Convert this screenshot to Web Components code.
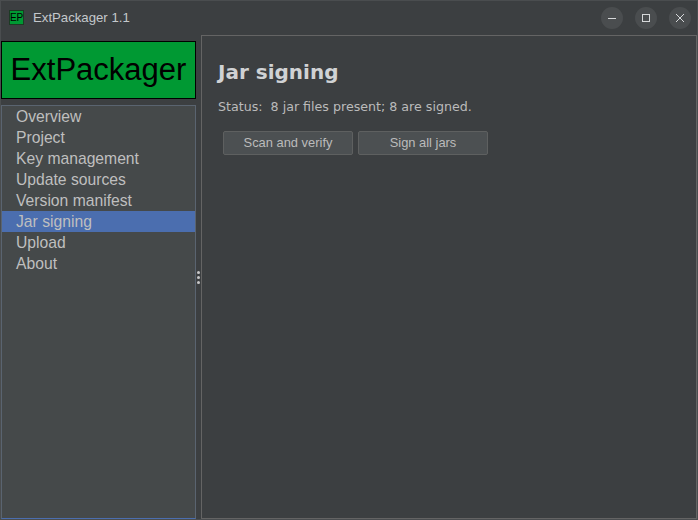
<!DOCTYPE html>
<html>
<head>
<meta charset="utf-8">
<title>ExtPackager 1.1</title>
<style>
  html, body { margin: 0; padding: 0; height: 100%; background: #3c3f41; overflow: hidden; }
  body { font-family: "Liberation Sans", sans-serif; color: #bbbbbb; }
</style>
</head>
<body>
<ep-window>
  <ep-titlebar slot="title" label="ExtPackager 1.1"></ep-titlebar>
  <ep-sidebar slot="side" heading="ExtPackager">
    <ep-nav-item>Overview</ep-nav-item>
    <ep-nav-item>Project</ep-nav-item>
    <ep-nav-item>Key management</ep-nav-item>
    <ep-nav-item>Update sources</ep-nav-item>
    <ep-nav-item>Version manifest</ep-nav-item>
    <ep-nav-item selected>Jar signing</ep-nav-item>
    <ep-nav-item>Upload</ep-nav-item>
    <ep-nav-item>About</ep-nav-item>
  </ep-sidebar>
  <ep-splitter slot="split"></ep-splitter>
  <ep-panel slot="main" heading="Jar signing" status="Status:&nbsp; 8 jar files present; 8 are signed.">
    <ep-button>Scan and verify</ep-button>
    <ep-button>Sign all jars</ep-button>
  </ep-panel>
</ep-window>

<script>
class EpWindow extends HTMLElement {
  connectedCallback() {
    this.attachShadow({ mode: "open" });
    this.shadowRoot.innerHTML = `
      <style>
        :host {
          display: grid; box-sizing: border-box; width: 698px; height: 520px;
          grid-template-rows: 34px 1fr; background: #3c3f41;
          border: 1px solid #4a4d4f;
        }
        .body { display: flex; min-height: 0; }
      </style>
      <slot name="title"></slot>
      <div class="body">
        <slot name="side"></slot>
        <slot name="split"></slot>
        <slot name="main"></slot>
      </div>
    `;
  }
}

class EpTitlebar extends HTMLElement {
  connectedCallback() {
    this.attachShadow({ mode: "open" });
    const label = this.getAttribute("label") || "";
    this.shadowRoot.innerHTML = `
      <style>
        :host {
          display: flex; align-items: center; padding: 0 6px 1px 8px;
          font: 13.2px "Liberation Sans", sans-serif; color: #c4c8cc;
        }
        .icon {
          display: flex; align-items: center; justify-content: center;
          width: 15px; height: 15px; box-sizing: border-box; margin-right: 9px;
          background: #009933; border: 1px solid #1c3a24; color: #000;
          font: 10px/13px "Liberation Sans", sans-serif; letter-spacing: -0.2px;
          white-space: nowrap;
        }
        .label { flex: 1; }
        .btns { display: flex; gap: 12px; }
        .btn {
          width: 22px; height: 22px; border-radius: 50%; background: #4a4d4f;
          display: flex; align-items: center; justify-content: center;
        }
        svg { width: 10px; height: 10px; stroke: #d6d8da; fill: none; stroke-width: 1; }
      </style>
      <div class="icon">EP</div>
      <div class="label">${label}</div>
      <div class="btns">
        <div class="btn"><svg viewBox="0 0 10 10"><path d="M1 5.5h8"/></svg></div>
        <div class="btn"><svg viewBox="0 0 10 10"><rect x="1.5" y="1.5" width="7" height="7"/></svg></div>
        <div class="btn"><svg viewBox="0 0 10 10"><path d="M1 1l8 8M9 1l-8 8"/></svg></div>
      </div>
    `;
  }
}

class EpSidebar extends HTMLElement {
  connectedCallback() {
    this.attachShadow({ mode: "open" });
    const heading = this.getAttribute("heading") || "";
    this.shadowRoot.innerHTML = `
      <style>
        :host { display: flex; flex-direction: column; width: 195px; flex: none; padding-top: 6px; gap: 6px; }
        .logo {
          box-sizing: border-box; height: 58px; background: #009933; border: 1px solid #000;
          color: #000; font: 31px/56px "Liberation Sans", sans-serif; text-align: center;
        }
        .list {
          flex: 1; background: #45494a; border: 1px solid #5a6470; border-bottom-color: #4b6eaf;
        }
      </style>
      <div class="logo">${heading}</div>
      <div class="list"><slot></slot></div>
    `;
  }
}

class EpNavItem extends HTMLElement {
  connectedCallback() {
    this.attachShadow({ mode: "open" });
    this.shadowRoot.innerHTML = `
      <style>
        :host {
          display: block; height: 21px; padding-left: 14px;
          font: 15.7px/21px "Liberation Sans", sans-serif; color: #bfbfbf; white-space: nowrap;
        }
        :host([selected]) { background: #4b6eaf; }
      </style>
      <slot></slot>
    `;
  }
}

class EpSplitter extends HTMLElement {
  connectedCallback() {
    this.attachShadow({ mode: "open" });
    this.shadowRoot.innerHTML = `
      <style>
        :host {
          display: flex; flex-direction: column; align-items: center; justify-content: center;
          width: 5px; flex: none; gap: 2px;
        }
        i { width: 3px; height: 3px; border-radius: 50%; background: #c8c8c8; }
      </style>
      <i></i><i></i><i></i>
    `;
  }
}

class EpPanel extends HTMLElement {
  connectedCallback() {
    this.attachShadow({ mode: "open" });
    const heading = this.getAttribute("heading") || "";
    const status = this.getAttribute("status") || "";
    this.shadowRoot.innerHTML = `
      <style>
        :host {
          display: flex; flex-direction: column; flex: 1; box-sizing: border-box;
          border: 1px solid #646464;
          padding: 23px 16px 0 16px; background: #3c3f41; color: #bbbbbb;
        }
        h1 {
          margin: 0; font: bold 20px/27px "DejaVu Sans", sans-serif; color: #d0d2d4;
        }
        p { margin: 13px 0 0; font: 12.65px/16px "DejaVu Sans", sans-serif; }
        .row { display: flex; gap: 5px; margin: 16px 0 0 5px; }
      </style>
      <h1>${heading}</h1>
      <p>${status}</p>
      <div class="row"><slot></slot></div>
    `;
  }
}

class EpButton extends HTMLElement {
  connectedCallback() {
    this.attachShadow({ mode: "open" });
    this.shadowRoot.innerHTML = `
      <style>
        :host {
          display: block; box-sizing: border-box; width: 130px; height: 24px;
          background: #4c5052; border: 1px solid #5e6060; border-radius: 2px;
          font: 12.9px/21px "Liberation Sans", sans-serif; color: #bbbbbb; text-align: center;
        }
      </style>
      <slot></slot>
    `;
  }
}

customElements.define("ep-window", EpWindow);
customElements.define("ep-titlebar", EpTitlebar);
customElements.define("ep-sidebar", EpSidebar);
customElements.define("ep-nav-item", EpNavItem);
customElements.define("ep-splitter", EpSplitter);
customElements.define("ep-panel", EpPanel);
customElements.define("ep-button", EpButton);
</script>
</body>
</html>
